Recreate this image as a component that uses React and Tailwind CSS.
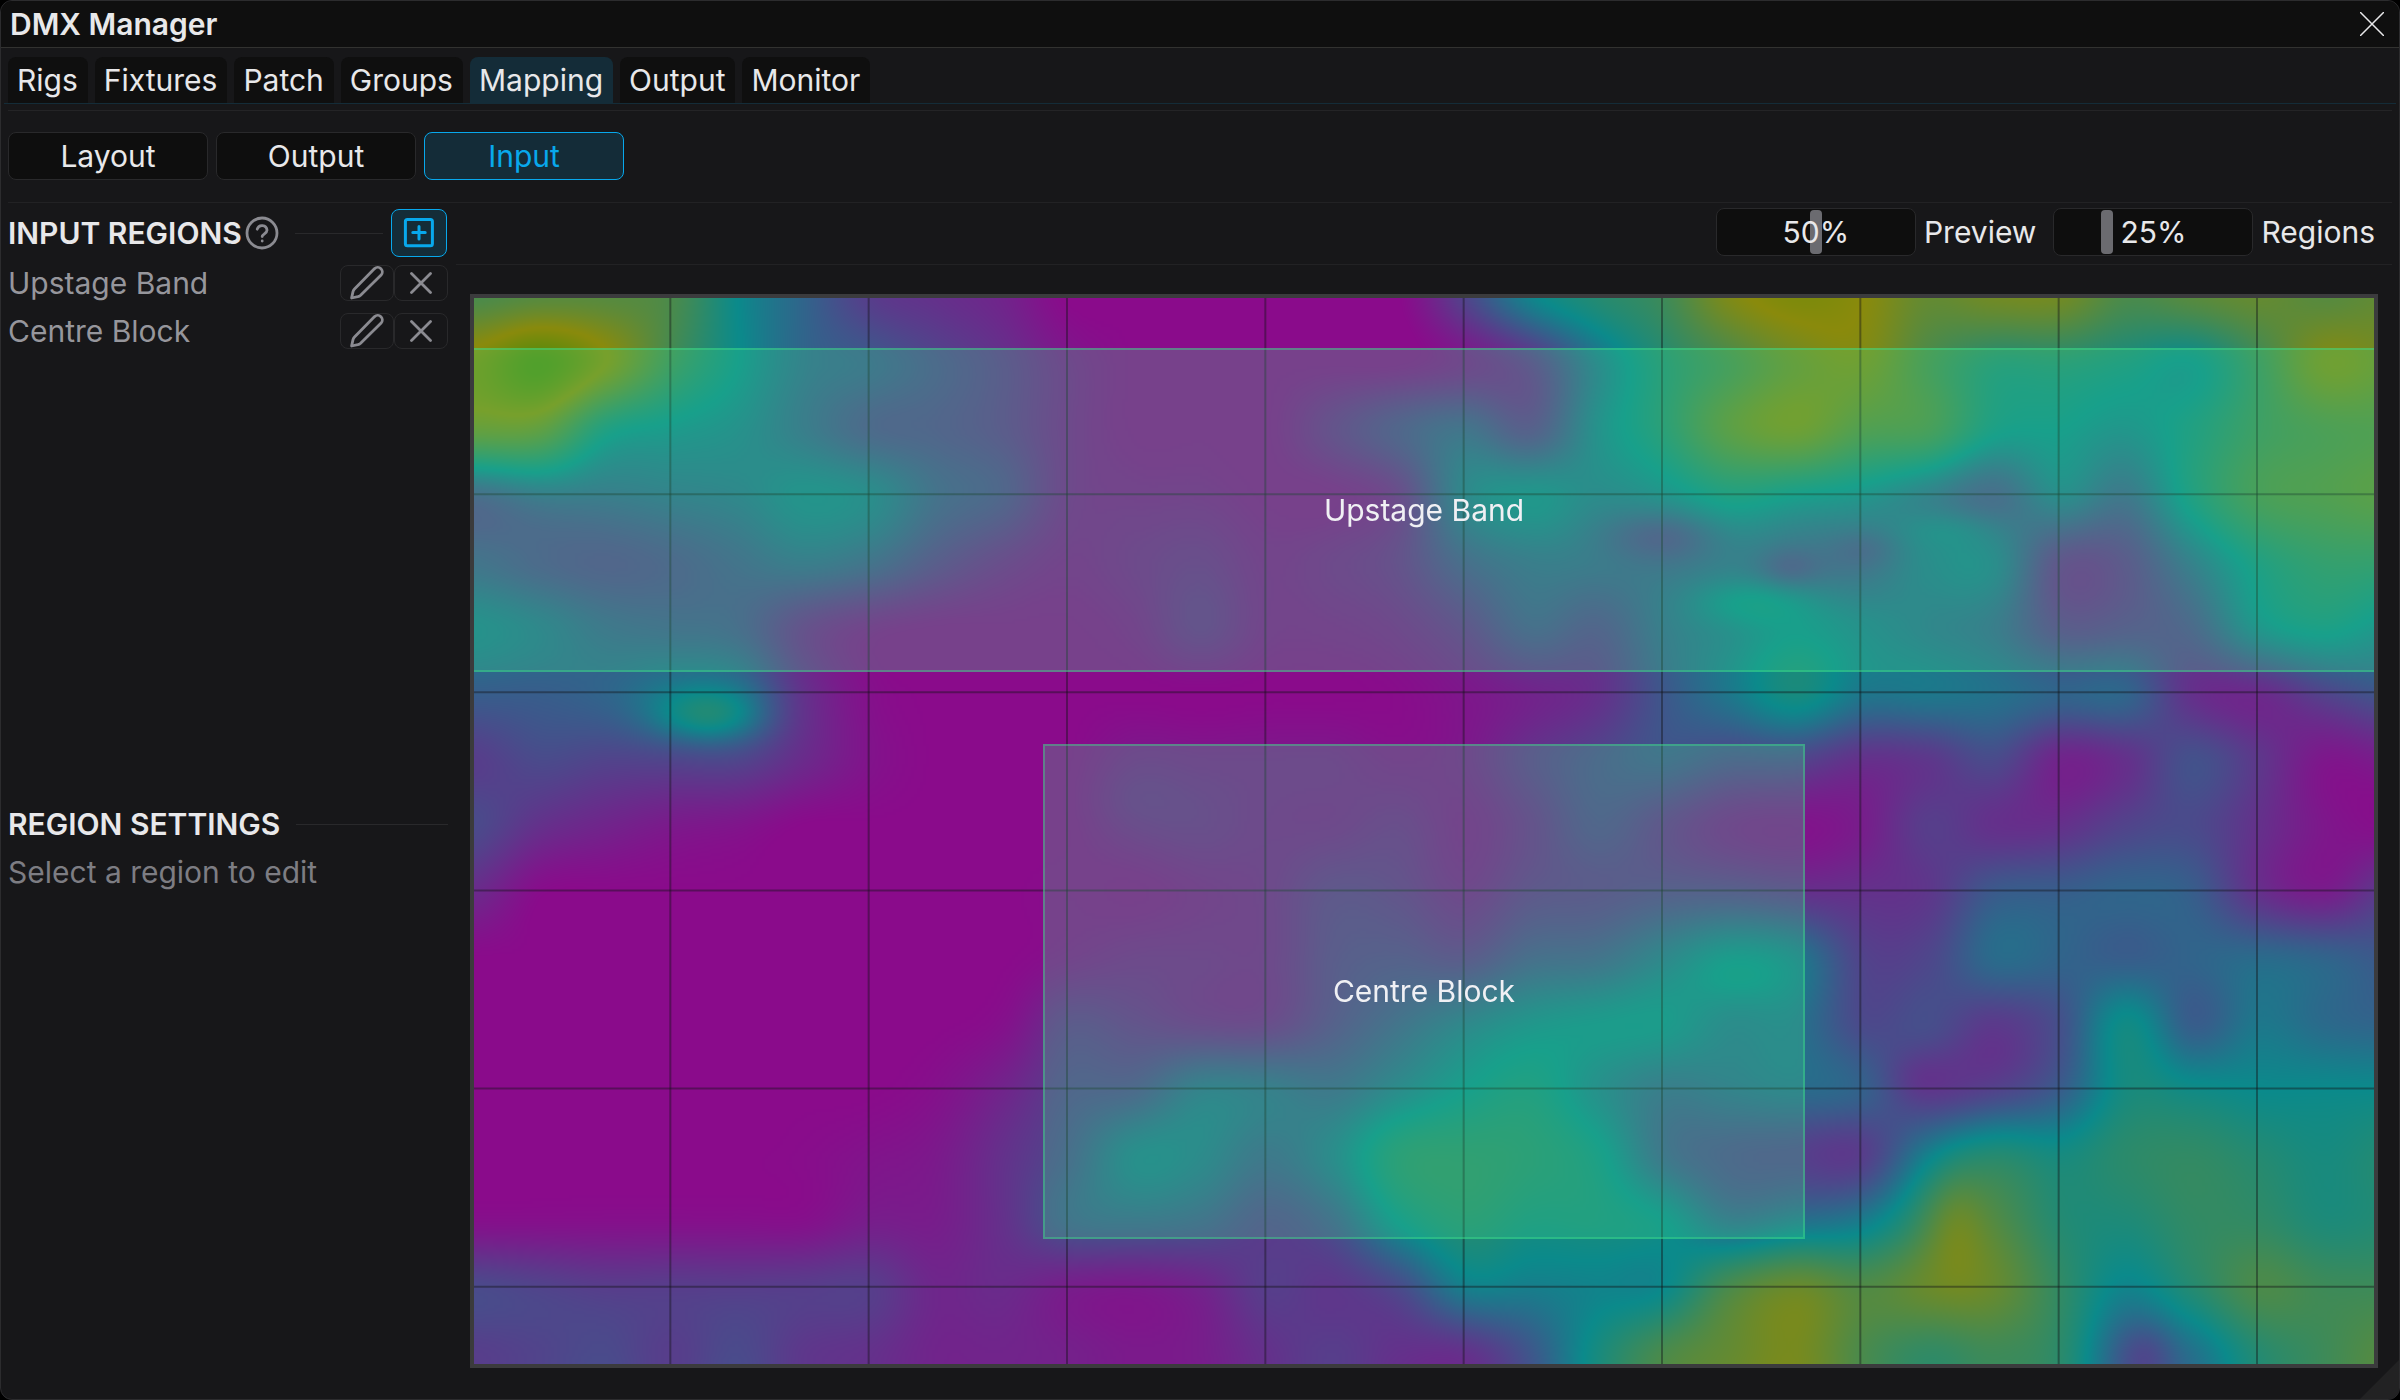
import React, { useEffect, useRef, useState } from 'react';

const TABS = ['Rigs', 'Fixtures', 'Patch', 'Groups', 'Mapping', 'Output', 'Monitor'];
const VIEWS = ['Layout', 'Output', 'Input'];

// x, y, w, h are fractions of the preview
const REGIONS = [
  { name: 'Upstage Band', x: 0, y: 0.049, w: 1, h: 0.302 },
  { name: 'Centre Block', x: 0.3, y: 0.419, w: 0.4, h: 0.462 },
];

// Field samples, three per grid cell. 0 magenta, 10 cyan, 20 yellow, 30 green
const FIELD = [
  [15, 16, 16, 15, 10, 7, 4, 3, 2, 0, 0, 0, 0, 0, 0, 4.5, 9.5, 12, 14, 19, 21, 20, 17, 18, 18, 15, 16, 17, 16, 17],
  [21, 24, 20, 14, 10, 7, 6, 4.5, 3, 1, 0, 0, 0, 0, 0, 1, 3, 8, 12, 15, 18, 19, 15, 12, 12, 11, 10, 14, 19, 18],
  [18, 17.5, 11, 9.5, 8.5, 6.5, 4.5, 4, 3, 1, 0, 0, 0, 2, 4, 5.5, 3.5, 8.5, 12, 17, 19, 16, 15, 10.5, 10, 9, 11, 14, 15.5, 16],
  [5, 6.5, 6.5, 7, 7.5, 8.7, 8, 5.3, 4, 1, 0.5, 0.5, 0, 0, 1.5, 7.5, 9, 8, 9, 11, 10, 9, 7, 5, 8, 6, 11, 15, 16, 17],
  [5.5, 4.5, 4, 4.5, 5.5, 6.5, 5.5, 3.2, 1.5, 0.5, 1, 1.5, 0.5, 1, 2, 5, 6.5, 6.5, 6.5, 7, 6, 6, 8, 8, 2.5, 3, 7, 11, 13, 13],
  [8.5, 7.5, 6, 5.5, 5, 2, 0.5, 0, 0, 0, 0.5, 2, 0.5, 0.5, 1, 2.5, 5, 4, 6.5, 8, 9.5, 8.5, 7.5, 6.5, 3.2, 3.5, 4.5, 9, 10.5, 9],
  [6.5, 6.5, 7, 8, 7.5, 3, 0.5, 0, 0, 0, 0, 0, 0, 0, 0.2, 1, 2, 3, 6, 8.5, 11, 8.5, 8.5, 8, 7, 7, 3, 2.5, 4.5, 6],
  [4, 5, 4.5, 4.5, 4.5, 2.5, 0.7, 0, 0, 0, 1, 1, 1, 1, 0.5, 1, 3, 4.5, 5.5, 4.5, 4.5, 3, 3.5, 5, 2, 3, 5.5, 3.5, 1, 1.5],
  [5, 3, 2, 1.2, 0.8, 0, 0, 0, 0, 0, 1, 1.5, 1, 1, 1.5, 0.5, 2, 4, 2.5, 1, 0.7, 1.5, 4, 3, 3, 4.5, 5, 3, 1, 0.3],
  [2.5, 0.2, 0, 0, 0, 0, 0, 0, 0, 0.2, 0, 0.5, 1, 2.5, 2.2, 1, 2.6, 3, 3.5, 3.5, 3, 3, 3.5, 6.2, 6.5, 7, 6.5, 3, 1.5, 4],
  [0, 0, 0, 0, 0, 0, 0, 0, 0, 0.5, 1, 1, 1, 3, 3.5, 3, 5, 5.5, 7.5, 9.2, 8.5, 4.5, 4.7, 7.5, 7, 6.5, 7, 7.5, 7, 6],
  [0, 0, 0, 0, 0, 0, 0, 0, 0.5, 2.8, 2.2, 1.5, 1.5, 3.5, 5.5, 7.5, 9, 9.5, 9.5, 8, 8, 5, 5.3, 4, 5.5, 10.5, 6.5, 8.5, 7.5, 7],
  [0, 0, 0, 0, 0, 0, 0, 0.5, 2, 4, 4.5, 7, 6.7, 6, 8, 10, 11, 8.5, 6.5, 7, 7.5, 6.8, 4, 4.5, 6.5, 11, 10.5, 10, 10, 10],
  [0, 0, 0, 0, 0, 0.2, 0.7, 1.2, 3, 5, 8.2, 7.8, 6, 8, 12, 12.5, 12, 10.5, 6, 4.5, 4.2, 4, 9, 12, 11, 12.5, 13, 12, 11, 12],
  [0.5, 0.5, 0.5, 0.5, 0.5, 0.5, 1.5, 1.5, 3, 5.5, 6, 5.5, 4, 5.5, 10, 12, 11, 11, 10, 7, 8, 9, 13, 15, 12, 11.5, 13, 13, 11.5, 12],
  [5, 4.5, 4, 4, 4, 4, 4, 2.2, 2.5, 1.5, 1.2, 2, 4, 3.5, 5, 9, 9, 9.5, 10, 15, 17.5, 15.5, 17, 17, 13, 9.5, 12, 15, 14, 14],
  [4, 4.5, 5, 4, 5, 3.5, 3, 2, 2, 1.7, 1.2, 1.5, 3, 4, 3, 3, 6, 11, 15, 17, 18.5, 15, 13, 14, 12.5, 6.5, 8, 12, 14, 16],
];

// Finer detail added on top of the samples: [col, row, radiusX, radiusY, amount]
const SPOTS = [
  [3.54, 6.33, 0.8, 0.4, 4.2],
  [10, 7.6, 0.8, 0.5, 0.6],
  [18, 3.6, 0.9, 0.4, -3],
  [21.05, 3.8, 0.5, 0.3, -1.3],
  [19.9, 4.1, 0.45, 0.3, -1.8],
  [22.3, 3.5, 0.8, 0.3, 1.5],
  [19.3, 4.6, 0.9, 0.35, 2.6],
  [19.1, 10.3, 0.6, 0.35, 0.8],
  [21.8, 11.8, 0.5, 0.4, -0.8],
  [23, 11.3, 0.5, 0.5, -0.4],
  [22.4, 14, 0.5, 0.8, 3.4],
  [25.3, 16, 0.4, 0.5, -1.5],
];

const STOPS = [[255, 0, 255], [0, 255, 255], [255, 255, 0], [0, 255, 0]];

const clamp = (v, lo, hi) => Math.min(hi, Math.max(lo, v));

function cubic(a, b, c, d, t) {
  return b + 0.5 * t * (c - a + t * (2 * a - 5 * b + 4 * c - d + t * (3 * (b - c) + d - a)));
}

function sampleField(u, v) {
  const col = Math.floor(u);
  const row = Math.floor(v);
  const at = (r, c) => FIELD[clamp(r, 0, FIELD.length - 1)][clamp(c, 0, FIELD[0].length - 1)];
  const rows = [-1, 0, 1, 2].map(o =>
    cubic(at(row + o, col - 1), at(row + o, col), at(row + o, col + 1), at(row + o, col + 2), u - col)
  );
  let value = cubic(rows[0], rows[1], rows[2], rows[3], v - row);
  for (const [x, y, rx, ry, amount] of SPOTS) {
    value += amount * Math.exp(-(((u - x) / rx) ** 2) - ((v - y) / ry) ** 2);
  }
  return clamp(value, 0, 29.99);
}

function PreviewCanvas({ opacity }) {
  const ref = useRef(null);

  useEffect(() => {
    const canvas = ref.current;
    const { width, height } = canvas;
    const ctx = canvas.getContext('2d');
    const image = ctx.createImageData(width, height);
    for (let y = 0; y < height; y++) {
      for (let x = 0; x < width; x++) {
        const value = sampleField((x / width) * 28.8, (y / height) * 16.2) / 10;
        const seg = Math.floor(value);
        const t = value - seg;
        const i = (y * width + x) * 4;
        for (let c = 0; c < 3; c++) {
          image.data[i + c] = STOPS[seg][c] * (1 - t) + STOPS[seg + 1][c] * t;
        }
        image.data[i + 3] = 255;
      }
    }
    ctx.putImageData(image, 0, 0);
  }, []);

  return <canvas ref={ref} width={640} height={360} className="absolute inset-0 w-full h-full" style={{ opacity }} />;
}

function GridLines() {
  const cols = [1, 2, 3, 4, 5, 6, 7, 8, 9];
  const rows = [1, 2, 3, 4, 5];
  return (
    <svg className="absolute inset-0 w-full h-full" stroke="#141418" strokeOpacity="0.42" strokeWidth="2" aria-hidden="true">
      {cols.map(n => <line key={n} x1={`${(n / 9.6) * 100}%`} x2={`${(n / 9.6) * 100}%`} y1="0" y2="100%" />)}
      {rows.map(n => <line key={n} x1="0" x2="100%" y1={`${(n / 5.4) * 100}%`} y2={`${(n / 5.4) * 100}%`} />)}
    </svg>
  );
}

function HelpIcon() {
  return (
    <svg width="34" height="34" viewBox="0 0 34 34" fill="none" stroke="#8b8b91" strokeWidth="2.8" strokeLinecap="round" strokeLinejoin="round">
      <circle cx="17" cy="17" r="15" />
      <path d="M12.2 13.2 A5 5 0 0 1 22 14.2 C22 17.4 17.2 18 17.2 20.6" />
      <path d="M17.2 25 V25.1" />
    </svg>
  );
}

function AddIcon() {
  return (
    <svg width="32" height="32" viewBox="0 0 32 32" fill="none" stroke="#08a8ec" strokeWidth="3" strokeLinecap="round" strokeLinejoin="round">
      <rect x="2.4" y="2.4" width="27" height="26.4" rx="2" />
      <path d="M16 9.5 V22 M9.8 15.6 H22.2" />
    </svg>
  );
}

function PencilIcon() {
  return (
    <svg className="shrink-0" width="36" height="36" viewBox="1 0 36 36" fill="none" stroke="#8b8b91" strokeWidth="2.8" strokeLinejoin="round">
      <path d="M26.6 3.6 A4.6 4.6 0 0 1 33.1 10.1 L12.6 30.2 Q11.4 31.3 9.8 31.7 L3.6 33 L5 26.6 Q5.4 25 6.5 23.9 Z" />
    </svg>
  );
}

function CrossIcon() {
  return (
    <svg width="22" height="22" viewBox="0 0 22 22" fill="none" stroke="#8b8b91" strokeWidth="2.8" strokeLinecap="round">
      <path d="M1.5 1.5 L20.5 20.5 M20.5 1.5 L1.5 20.5" />
    </svg>
  );
}

function PercentSlider({ label, value, onChange }) {
  return (
    <label className="flex items-center gap-2">
      <span className="relative flex w-[200px] h-12 rounded-lg border border-[#29292b] bg-[#0e0e0e] p-px">
        <input
          type="range"
          min="0"
          max="100"
          value={value}
          onChange={e => onChange(Number(e.target.value))}
          className="w-full h-full appearance-none bg-transparent [&::-webkit-slider-thumb]:appearance-none [&::-webkit-slider-thumb]:w-3 [&::-webkit-slider-thumb]:h-11 [&::-webkit-slider-thumb]:rounded-sm [&::-webkit-slider-thumb]:bg-[#6b6b70]"
        />
        <span className="absolute inset-0 flex items-center justify-center pointer-events-none">{value}%</span>
      </span>
      {label}
    </label>
  );
}

function RegionRow({ name }) {
  return (
    <li className="flex items-center h-12 text-[#96969c]">
      <span className="flex-1">{name}</span>
      <div className="flex">
        <button aria-label={`Rename ${name}`} className="flex items-center justify-center w-[54px] h-9 rounded-lg border border-[#29292b]">
          <PencilIcon />
        </button>
        <button aria-label={`Delete ${name}`} className="flex items-center justify-center w-[54px] h-9 rounded-lg border border-[#29292b]">
          <CrossIcon />
        </button>
      </div>
    </li>
  );
}

export default function App() {
  const [tab, setTab] = useState('Mapping');
  const [view, setView] = useState('Input');
  const [preview, setPreview] = useState(50);
  const [regionFill, setRegionFill] = useState(25);

  return (
    <div className="h-screen bg-black">
      <div className="relative flex flex-col h-full overflow-hidden rounded-xl border border-[#2c2c2e] bg-[#171719] text-[#e8e8ea] text-3xl font-['Inter',sans-serif]">
        {/* Title bar */}
        <header className="flex items-center justify-between h-[47px] shrink-0 border-b border-[#323230] bg-[#0f0f0f] pl-[9px] pr-[15px]">
          <h1 className="font-semibold">DMX Manager</h1>
          <button aria-label="Close">
            <svg width="24" height="24" viewBox="0 0 24 24" stroke="#e8e8ea" strokeWidth="1.5">
              <path d="M0 0 L24 24 M24 0 L0 24" />
            </svg>
          </button>
        </header>

        {/* Tabs */}
        <nav className="mx-[3px] mt-[9px] shrink-0 flex gap-[7px] border-b border-[#142c38] pl-1" role="tablist">
          {TABS.map(name => (
            <button
              key={name}
              role="tab"
              aria-selected={name === tab}
              onClick={() => setTab(name)}
              className={`h-[46px] pl-[9px] pr-[10px] rounded-t-lg ${name === tab ? 'bg-[#142c38]' : 'bg-[#0f0f0f]'}`}
            >
              {name}
            </button>
          ))}
        </nav>

        <main className="flex flex-col flex-1 min-h-0 mx-[7px] mt-[6px] border-t border-[#242426]">
          <div className="flex gap-2 pt-[21px] pb-[22px] shrink-0">
            {VIEWS.map(name => (
              <button
                key={name}
                onClick={() => setView(name)}
                className={`w-[200px] h-12 rounded-lg border ${
                  name === view ? 'border-[#08a8ec] bg-[#142c38] text-[#08a8ec]' : 'border-[#29292b] bg-[#0e0e0e]'
                }`}
              >
                {name}
              </button>
            ))}
          </div>

          <div className="flex flex-1 min-h-0 border-t border-[#222224]">
            {/* Sidebar */}
            <aside className="flex flex-col w-[440px] shrink-0 pb-2">
              <section className="flex-1 basis-0 min-h-0 pt-1.5">
                <div className="flex items-center h-12 pr-px">
                  <h2 className="font-semibold">INPUT REGIONS</h2>
                  <button aria-label="About input regions" className="ml-[3px]">
                    <HelpIcon />
                  </button>
                  <div className="flex-1 h-px ml-4 mr-2 bg-[#29292b]" />
                  <button aria-label="Add region" className="flex items-center justify-center w-14 h-12 rounded-lg border border-[#08a8ec] bg-[#142c38]">
                    <AddIcon />
                  </button>
                </div>
                <ul className="pt-0.5">
                  {REGIONS.map(region => <RegionRow key={region.name} name={region.name} />)}
                </ul>
              </section>
              <section className="flex-1 basis-0">
                <div className="flex items-center gap-4 h-12">
                  <h2 className="font-semibold">REGION SETTINGS</h2>
                  <div className="flex-1 h-px bg-[#29292b]" />
                </div>
                <p className="flex items-center h-12 text-[#7d7d83]">Select a region to edit</p>
              </section>
            </aside>

            {/* Preview */}
            <section className="flex flex-col flex-1 min-w-0 ml-2">
              <div className="flex justify-end gap-[17px] shrink-0 border-b border-[#222224] pt-[5px] pb-2 pr-[17px]">
                <PercentSlider label="Preview" value={preview} onChange={setPreview} />
                <PercentSlider label="Regions" value={regionFill} onChange={setRegionFill} />
              </div>
              <div className="flex-1 min-h-0 pt-[29px] pl-[14px] pr-[14px] pb-[31px]">
                <div className="relative w-full h-full overflow-hidden border-2 border-[#3b3b3d]">
                  <PreviewCanvas opacity={preview / 100} />
                  <GridLines />
                  {REGIONS.map(({ name, x, y, w, h }) => (
                    <div
                      key={name}
                      className="absolute flex items-center justify-center border-2 border-[#3ee08a]/40 text-[#f0f0f4]"
                      style={{
                        left: `${x * 100}%`,
                        top: `${y * 100}%`,
                        width: `${w * 100}%`,
                        height: `${h * 100}%`,
                        backgroundColor: `rgba(62, 226, 138, ${regionFill / 100})`,
                      }}
                    >
                      {name}
                    </div>
                  ))}
                  <div className="absolute inset-0 border-2 border-[#3b3b3d] pointer-events-none" />
                </div>
              </div>
            </section>
          </div>
        </main>

        {/* Resize grip */}
        <svg className="absolute right-0 bottom-0" width="39" height="39" viewBox="0 0 39 39" fill="#222223" aria-hidden="true">
          <path d="M39 0 V39 H0 Z" />
        </svg>
      </div>
    </div>
  );
}
